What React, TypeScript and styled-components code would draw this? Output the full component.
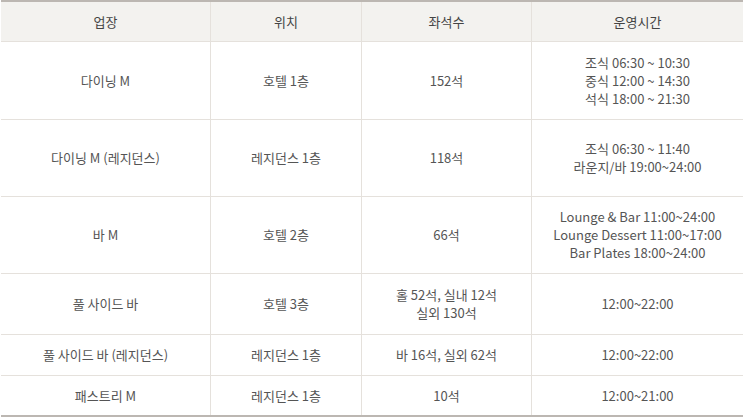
import React from "react";
import styled, { createGlobalStyle } from "styled-components";

const Global = createGlobalStyle`
  html, body { margin: 0; padding: 0; background: #fff; }
  body { font-family: "Noto Sans CJK KR", "Noto Sans", sans-serif; }
`;

const Table = styled.div`
  margin: 0 1px;
  border-top: 2px solid #bcb7b2;
  border-bottom: 2px solid #bcb7b2;
  color: #555;
  font-size: 13px;
  line-height: 18px;
`;

const Row = styled.div<{ $h: number; $head?: boolean; $last?: boolean }>`
  display: grid;
  grid-template-columns: 210px 151px 170px 1fr;
  height: ${(p) => p.$h}px;
  background: ${(p) => (p.$head ? "#f3f2ef" : "#fff")};
  border-bottom: ${(p) => (p.$last ? "none" : "1px solid #e5e1dc")};
  color: ${(p) => (p.$head ? "#444" : "#555")};
`;

const Cell = styled.div`
  display: flex;
  flex-direction: column;
  align-items: center;
  justify-content: center;
  text-align: center;
  border-right: 1px solid #e5e1dc;
  &:last-child { border-right: none; }
`;

const Line = styled.span`
  display: block;
  white-space: nowrap;
`;

type R = { h: number; cells: string[][] };

const rows: R[] = [
  {
    h: 77,
    cells: [["다이닝 M"], ["호텔 1층"], ["152석"], ["조식 06:30 ~ 10:30", "중식 12:00 ~ 14:30", "석식 18:00 ~ 21:30"]],
  },
  {
    h: 76,
    cells: [["다이닝 M (레지던스)"], ["레지던스 1층"], ["118석"], ["조식 06:30 ~ 11:40", "라운지/바 19:00~24:00"]],
  },
  {
    h: 76,
    cells: [["바 M"], ["호텔 2층"], ["66석"], ["Lounge & Bar 11:00~24:00", "Lounge Dessert 11:00~17:00", "Bar Plates 18:00~24:00"]],
  },
  {
    h: 60,
    cells: [["풀 사이드 바"], ["호텔 3층"], ["홀 52석, 실내 12석", "실외 130석"], ["12:00~22:00"]],
  },
  {
    h: 40,
    cells: [["풀 사이드 바 (레지던스)"], ["레지던스 1층"], ["바 16석, 실외 62석"], ["12:00~22:00"]],
  },
  {
    h: 39,
    cells: [["패스트리 M"], ["레지던스 1층"], ["10석"], ["12:00~21:00"]],
  },
];

export default function App() {
  return (
    <>
      <Global />
      <Table>
        <Row $h={39} $head>
          {["업장", "위치", "좌석수", "운영시간"].map((t) => (
            <Cell key={t}>{t}</Cell>
          ))}
        </Row>
        {rows.map((r, i) => (
          <Row key={i} $h={r.h} $last={i === rows.length - 1}>
            {r.cells.map((c, j) => (
              <Cell key={j}>
                {c.map((l, k) => (
                  <Line key={k}>{l}</Line>
                ))}
              </Cell>
            ))}
          </Row>
        ))}
      </Table>
    </>
  );
}
